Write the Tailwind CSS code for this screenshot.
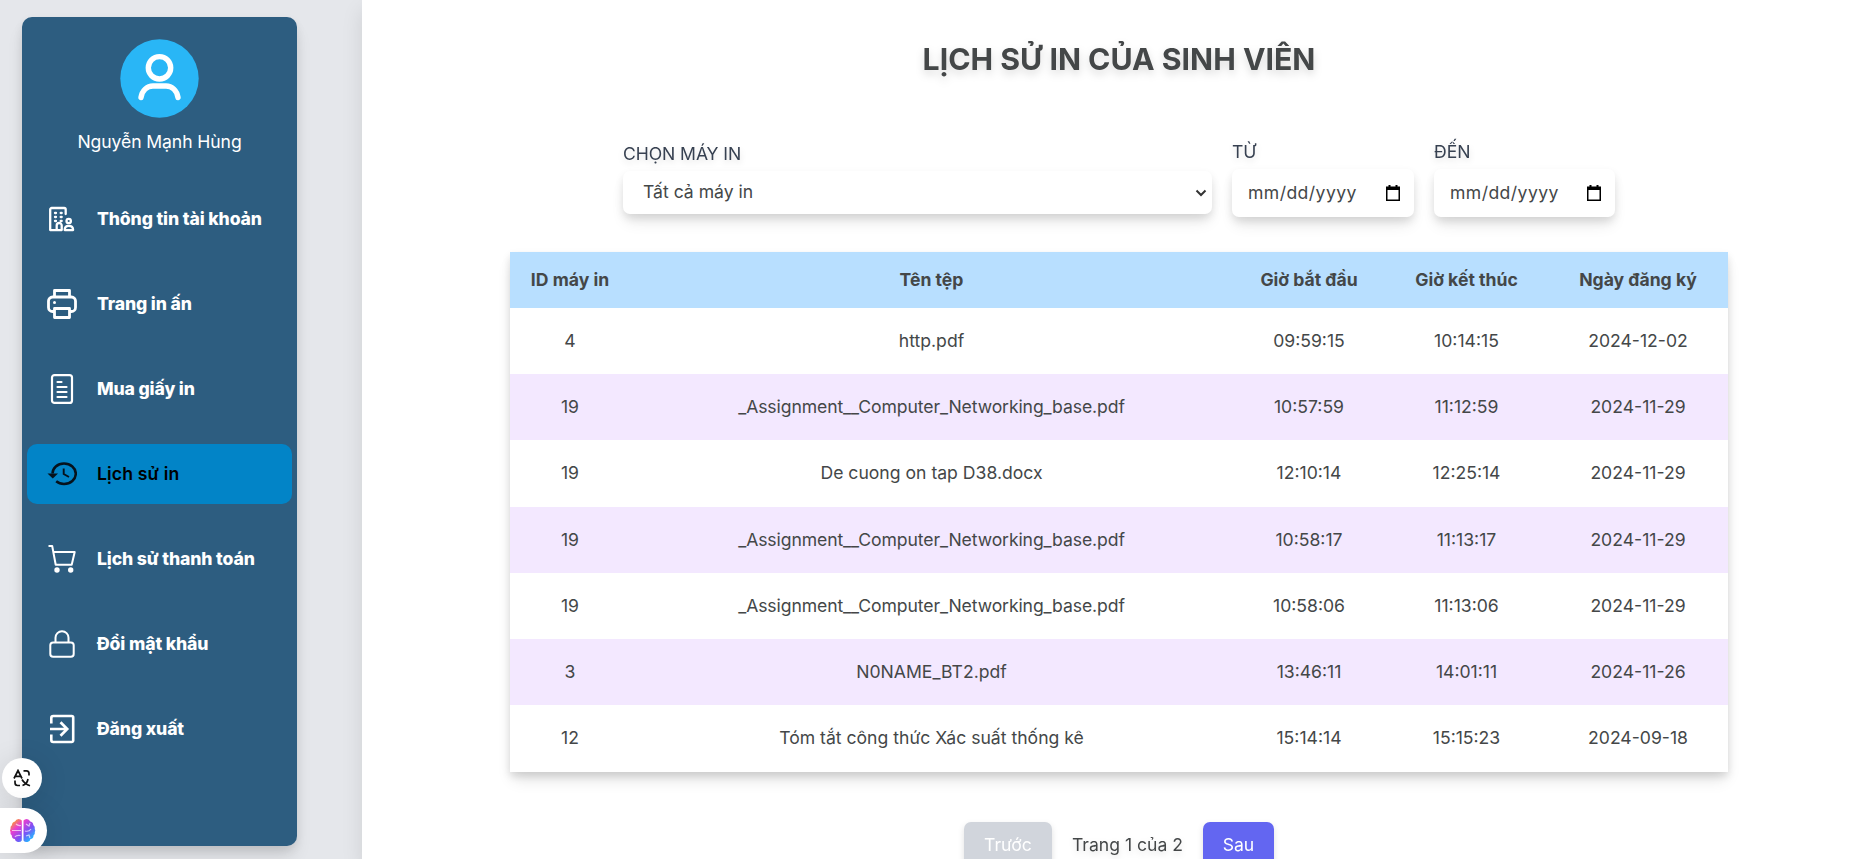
<!DOCTYPE html>
<html lang="vi">
<head>
<meta charset="utf-8">
<title>Lịch sử in</title>
<script src="https://cdn.jsdelivr.net/npm/@tailwindcss/browser@4"></script>
</head>
<body class="h-[859px] overflow-hidden bg-gray-200 font-['Inter',sans-serif] text-[17.6px] text-[#444748]">
<div class="flex h-[859px]">
  <div class="w-[362px] shrink-0 bg-gray-200 pl-[22px] pt-[17px]">
    <aside class="flex h-[829px] w-[275px] flex-col items-center rounded-[10px] bg-[#2d5d80] pt-[22px] text-white shadow-[0_12px_18px_-3px_rgba(0,0,0,0.12),0_4px_10px_rgba(0,0,0,0.08)]">
      <svg class="size-[79px]" viewBox="0 0 79 79" fill="none" stroke="#fff" stroke-width="5.4" stroke-linecap="round"><circle cx="39.5" cy="39.5" r="39.2" fill="#29b6f6" stroke="none"/><circle cx="39.5" cy="28.8" r="11.2"/><path d="M21 58.5c1-7 6-11.500 12-11.500h13c6 0 11 4.500 12 11.500"/></svg>
      <p class="mt-[10px] leading-7 tracking-[-0.1px]">Nguyễn Mạnh Hùng</p>
      <nav class="mt-[33px] flex w-[265px] flex-col gap-[25px] font-extrabold tracking-[-0.12px]">
        <a class="flex h-[60px] items-center gap-[20px] pl-5"><svg class="size-[30px]" viewBox="0 0 30 30" fill="none" stroke="#fff" stroke-width="2.3" stroke-linecap="round" stroke-linejoin="round"><path d="M18.700 10V5.500a1.500 1.500 0 0 0-1.500-1.500H4.700a1.500 1.500 0 0 0-1.500 1.500v20.600h11.500v-4.600a2.500 2.500 0 0 0-5 0v4.600"/><path d="M8 9h1M13.700 9h1M8 13h1M13.700 13h1M8 17h1M13.700 17h1"/><circle cx="21.700" cy="17" r="2.200"/><path d="M17.700 26.100c0-3 1.500-4.200 4-4.200s4.400 1.200 4.400 4.200z"/></svg>Thông tin tài khoản</a>
        <a class="flex h-[60px] items-center gap-[20px] pl-5"><svg class="size-[30px]" viewBox="0 0 30 30" fill="none" stroke="#fff" stroke-width="2.800" stroke-linejoin="round"><path d="M7.500 8V1.500h15V8M7.500 22.500h-2a4 4 0 0 1-4-4V12a4 4 0 0 1 4-4h19a4 4 0 0 1 4 4v6.500a4 4 0 0 1-4 4h-2M7.500 19.500h15v9h-15z"/><circle cx="7.500" cy="13.500" r="1.500" fill="#fff" stroke="none"/></svg>Trang in ấn</a>
        <a class="flex h-[60px] items-center gap-[20px] pl-5"><svg class="size-[30px]" viewBox="0 0 30 30" fill="none" stroke="#fff" stroke-width="2.2" stroke-linecap="round"><rect x="5" y="1.100" width="20" height="27.800" rx="2.500"/><path d="M10.500 8h4M10.500 13h9M10.500 18h9M10.500 23h9"/></svg>Mua giấy in</a>
        <a class="flex h-[60px] items-center gap-[20px] rounded-[10px] bg-[#0284c7] pl-5 font-semibold tracking-[0.15px] text-black"><svg class="size-[30px]" viewBox="0 0 30 30" fill="none" stroke="#06121c" stroke-width="2.500"><path d="M5.500 14.500c0-5.500 5-10 11.500-10s11.800 4.500 11.800 10.200S23.500 25 17 25c-3 0-5.800-1-7.800-2.700"/><path d="M.5 14.500h10.500l-5.200 5z" fill="#06121c" stroke="none"/><path d="M16.700 9.500v5.500l5.300 3" stroke-width="1.900"/></svg>Lịch sử in</a>
        <a class="flex h-[60px] items-center gap-[20px] pl-5"><svg class="size-[30px]" viewBox="0 0 30 30" fill="none" stroke="#fff" stroke-width="2" stroke-linejoin="round"><path d="M1.500 2h3.700l3.500 18.700h16l3-12.700H6.400"/><circle cx="10" cy="26" r="2.700" fill="#fff" stroke="none"/><circle cx="23.700" cy="26" r="2.700" fill="#fff" stroke="none"/></svg>Lịch sử thanh toán</a>
        <a class="flex h-[60px] items-center gap-[20px] pl-5"><svg class="size-[30px]" viewBox="0 0 30 30" fill="none" stroke="#fff" stroke-width="2"><rect x="3.300" y="13.400" width="23.400" height="14.400" rx="2.800"/><path d="M8.500 13.400V8.700a6.500 6.500 0 0 1 13 0v4.700"/></svg>Đổi mật khẩu</a>
        <a class="flex h-[60px] items-center gap-[20px] pl-5"><svg class="size-[30px]" viewBox="0 0 30 30" fill="none" stroke="#fff" stroke-width="2.600"><path d="M4.300 9.500V4a2 2 0 0 1 2-2h18.400a1.500 1.500 0 0 1 1.500 1.500v23a1.500 1.500 0 0 1-1.500 1.500H6.300a2 2 0 0 1-2-2v-5.500"/><path d="M3 15h16.500M13.500 8.200l6.700 6.800-6.700 6.800" stroke-width="2.700"/></svg>Đăng xuất</a>
      </nav>
    </aside>
  </div>
  <main class="flex grow flex-col items-center bg-white pl-2 shadow-[0_10px_20px_rgba(0,0,0,0.1)]">
    <h1 class="mt-[39px] text-[30.25px] leading-[40px] font-bold drop-shadow-lg">LỊCH SỬ IN CỦA SINH VIÊN</h1>
    <div class="mt-[58px] flex h-[80px] w-[992px] gap-[20px]">
      <div class="flex w-[589px] flex-col pt-[2px]">
        <label class="h-[32px] leading-[30px] tracking-[-0.1px] text-[#374151] drop-shadow-md">CHỌN MÁY IN</label>
        <div class="flex h-[43px] items-center justify-between rounded-[7px] bg-white pr-[5px] pl-5 shadow-[0_10px_15px_-3px_rgba(0,0,0,0.1),0_4px_8px_rgba(0,0,0,0.1)]">Tất cả máy in<svg class="size-3" viewBox="0 0 12 12" fill="none" stroke="#333" stroke-width="2"><path d="M1.500 3.500 6 8l4.500-4.500"/></svg></div>
      </div>
      <div class="w-[182px]">
        <label class="block h-[31.500px] leading-[30px] text-[#374151] drop-shadow-md">TỪ</label>
        <div class="flex h-[48.500px] items-center justify-between rounded-[7px] bg-white pr-[14px] pl-4 shadow-[0_10px_15px_-3px_rgba(0,0,0,0.1),0_4px_8px_rgba(0,0,0,0.1)]"><span class="tracking-[0.42px]">mm/dd/yyyy</span><svg class="h-4 w-[14px]" viewBox="0 0 14 16"><path d="M2.500 0h2v1.500h5V0h2v1.500H14V16H0V1.500h2.500zM1.500 5v9.500h11V5z" fill="#000" fill-rule="evenodd"/></svg></div>
      </div>
      <div class="w-[181px]">
        <label class="block h-[31.500px] leading-[30px] text-[#374151] drop-shadow-md">ĐẾN</label>
        <div class="flex h-[48.500px] items-center justify-between rounded-[7px] bg-white pr-[14px] pl-4 shadow-[0_10px_15px_-3px_rgba(0,0,0,0.1),0_4px_8px_rgba(0,0,0,0.1)]"><span class="tracking-[0.42px]">mm/dd/yyyy</span><svg class="h-4 w-[14px]" viewBox="0 0 14 16"><path d="M2.500 0h2v1.500h5V0h2v1.500H14V16H0V1.500h2.500zM1.500 5v9.500h11V5z" fill="#000" fill-rule="evenodd"/></svg></div>
      </div>
    </div>
    <table class="mt-[35px] w-[1218px] table-fixed border-collapse bg-white text-center shadow-[0_10px_15px_-3px_rgba(0,0,0,0.12),0_4px_8px_rgba(0,0,0,0.12)]">
      <colgroup><col class="w-[120px]"><col class="w-[603px]"><col class="w-[152px]"><col class="w-[163px]"><col class="w-[180px]"></colgroup>
      <thead><tr class="h-[56px] bg-[#b8dfff] font-semibold"><th>ID máy in</th><th>Tên tệp</th><th>Giờ bắt đầu</th><th>Giờ kết thúc</th><th>Ngày đăng ký</th></tr></thead>
      <tbody>
        <tr class="h-[66px]"><td>4</td><td>http.pdf</td><td>09:59:15</td><td>10:14:15</td><td>2024-12-02</td></tr>
        <tr class="h-[66px] bg-[#f3e8ff]"><td>19</td><td class="tracking-[-0.1px]">_Assignment__Computer_Networking_base.pdf</td><td>10:57:59</td><td>11:12:59</td><td>2024-11-29</td></tr>
        <tr class="h-[67px]"><td>19</td><td>De cuong on tap D38.docx</td><td>12:10:14</td><td>12:25:14</td><td>2024-11-29</td></tr>
        <tr class="h-[66px] bg-[#f3e8ff]"><td>19</td><td class="tracking-[-0.1px]">_Assignment__Computer_Networking_base.pdf</td><td>10:58:17</td><td>11:13:17</td><td>2024-11-29</td></tr>
        <tr class="h-[66px]"><td>19</td><td class="tracking-[-0.1px]">_Assignment__Computer_Networking_base.pdf</td><td>10:58:06</td><td>11:13:06</td><td>2024-11-29</td></tr>
        <tr class="h-[66px] bg-[#f3e8ff]"><td>3</td><td>N0NAME_BT2.pdf</td><td>13:46:11</td><td>14:01:11</td><td>2024-11-26</td></tr>
        <tr class="h-[67px]"><td>12</td><td>Tóm tắt công thức Xác suất thống kê</td><td>15:14:14</td><td>15:15:23</td><td>2024-09-18</td></tr>
      </tbody>
    </table>
    <div class="mt-[50px] flex h-[46px] shrink-0 items-center">
      <button class="h-full w-[88px] rounded-[7px] bg-gray-300 text-white drop-shadow-md">Trước</button>
      <span class="w-[151px] text-center drop-shadow-md">Trang 1 của 2</span>
      <button class="h-full w-[71px] rounded-[7px] bg-[#6366f1] text-white drop-shadow-md">Sau</button>
    </div>
  </main>
</div>
<div class="absolute top-[758px] left-[2px] flex size-10 items-center justify-center rounded-full bg-white shadow-[0_4px_30px_rgba(0,0,0,0.12)]"><svg class="size-[18px]" viewBox="0 0 18 18" fill="none" stroke="#111" stroke-width="1.700"><path d="M1 9.500 5 1.500l4 8M2.500 7.300h5M10.500 1.800h3q2.500 0 2.500 2.700v2M2 11.500v2q0 3 2.500 3H7M9.500 16.500c3-1 5-3.500 5.500-6.500M9 10.500c1.500 2.500 4 5 8 6.200"/></svg></div>
<div class="absolute top-[808px] left-0 h-[45px] w-[47px] rounded-r-full bg-white pt-[10px] pl-[9px] shadow-[0_4px_30px_rgba(0,0,0,0.12)]"><svg class="h-[25px] w-[27px]" viewBox="0 0 27 25"><defs><linearGradient id="brain" x1="0" y1="0" x2="1" y2="1"><stop offset="0.12" stop-color="#fb923c"/><stop offset=".32" stop-color="#e83fd0"/><stop offset=".6" stop-color="#7c50f5"/><stop offset=".85" stop-color="#29b0ff"/></linearGradient></defs><path d="M12.800 2.500v20q-1.300 2-4 1.500-2.600-.5-3-3-3-.3-3-3.500Q1 16.500 1.500 14 .5 12.500 1.500 11q-.5-2.500 1.500-4 0-3 3-3.500Q7 1 9.500 1q2.300 0 3.300 1.500zm1.700 0v20q1.300 2 4 1.500 2.600-.5 3-3 3-.3 3-3.500 1.800-1 1.300-3.500 1-1.500 0-3 .5-2.500-1.500-4 0-3-3-3.500Q20 1 17.800 1q-2.300 0-3.300 1.500z" fill="url(#brain)"/><path d="M3 12.500h9M7 6q2 2 5 1.500M6 19q1-2 5.500-1.500M16 13q4 1 6-2M17 6l3 2 1-3M17 18l3-1 1 3" fill="none" stroke="#fff" stroke-opacity=".65" stroke-width="1.200"/></svg></div>
</body>
</html>
